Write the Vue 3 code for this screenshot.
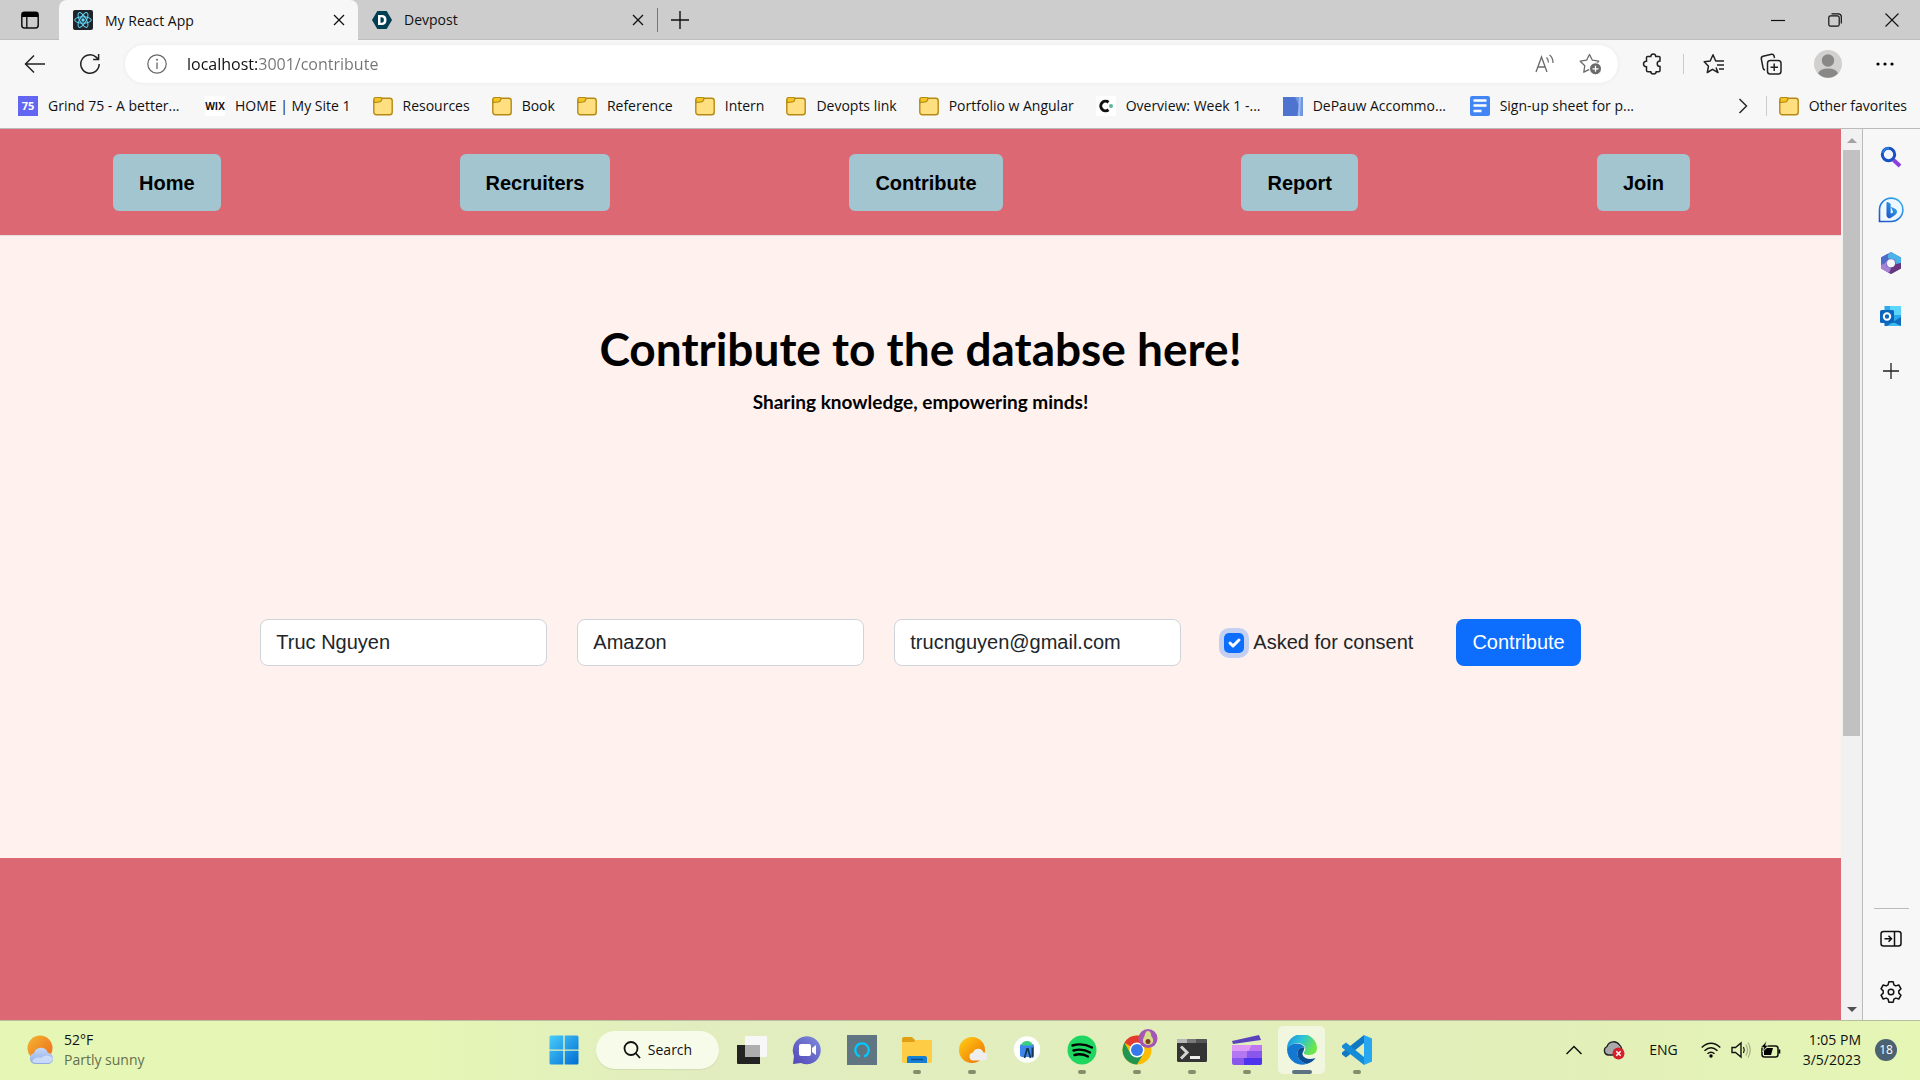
<script setup>
import { ref } from 'vue'

const bookmarks = [
  { icon: 'grind', label: 'Grind 75 - A better...', long: true },
  { icon: 'wix', label: 'HOME | My Site 1' },
  { icon: 'folder', label: 'Resources' },
  { icon: 'folder', label: 'Book' },
  { icon: 'folder', label: 'Reference' },
  { icon: 'folder', label: 'Intern' },
  { icon: 'folder', label: 'Devopts link' },
  { icon: 'folder', label: 'Portfolio w Angular' },
  { icon: 'course', label: 'Overview: Week 1 -...', long: true },
  { icon: 'depauw', label: 'DePauw Accommo...', long: true },
  { icon: 'doc', label: 'Sign-up sheet for p...', long: true }
]

const navLinks = ['Home', 'Recruiters', 'Contribute', 'Report', 'Join']

const apps = [
  { name: 'Task view', icon: 'taskview' },
  { name: 'Chat', icon: 'chat' },
  { name: 'Alexa', icon: 'alexa' },
  { name: 'File Explorer', icon: 'files', open: true },
  { name: 'Weather', icon: 'weather', open: true },
  { name: 'Android Studio', icon: 'android' },
  { name: 'Spotify', icon: 'spotify', open: true },
  { name: 'Chrome', icon: 'chrome', open: true },
  { name: 'Terminal', icon: 'terminal', open: true },
  { name: 'Clipchamp', icon: 'clipchamp', open: true },
  { name: 'Edge', icon: 'edge', open: true, active: true },
  { name: 'Visual Studio Code', icon: 'vscode', open: true }
]

const url = ref('localhost:3001/contribute')
const name = ref('Truc Nguyen')
const company = ref('Amazon')
const email = ref('trucnguyen@gmail.com')
const consent = ref(true)
</script>

<template>
  <div class="desktop">
    <header class="tabstrip">
      <button class="tab-actions" aria-label="Tab actions">
        <svg width="20" height="20" viewBox="0 0 20 20"><rect x="1.8" y="2.3" width="16.4" height="15.6" rx="2.6" fill="none" stroke="#111" stroke-width="1.5" /><path d="M2 7V4.5Q2 2 4.5 2h11Q18 2 18 4.500V7z" fill="#000" /><path d="M6.800 7v11" stroke="#111" stroke-width="1.400" /></svg>
      </button>
      <div class="tab tab-current">
        <svg width="20" height="20" viewBox="0 0 20 20"><rect width="20" height="20" rx="2" fill="#20232a" /><g fill="none" stroke="#61dafb" stroke-width="1"><ellipse cx="10" cy="10" rx="8.300" ry="3.200" /><ellipse cx="10" cy="10" rx="8.300" ry="3.200" transform="rotate(60 10 10)" /><ellipse cx="10" cy="10" rx="8.300" ry="3.200" transform="rotate(120 10 10)" /></g><circle cx="10" cy="10" r="1.700" fill="#61dafb" /></svg>
        <span class="tab-title">My React App</span>
        <button class="tab-close" aria-label="Close tab"><svg width="12" height="12" viewBox="0 0 12 12"><path d="M1 1l10 10M11 1L1 11" stroke="#111" stroke-width="1.300" /></svg></button>
      </div>
      <div class="tab">
        <svg width="20" height="20" viewBox="0 0 20 20"><path d="M5.300 1h9.400L20 10l-5.300 9H5.300L0 10z" fill="#003e54" /><path fill-rule="evenodd" d="M6 5h3.800q4.700 0 4.700 5t-4.700 5H6zM8.500 7.300v5.400h1.200q2.200 0 2.200-2.700t-2.200-2.700z" fill="#fff" /></svg>
        <span class="tab-title">Devpost</span>
        <button class="tab-close" aria-label="Close tab"><svg width="12" height="12" viewBox="0 0 12 12"><path d="M1 1l10 10M11 1L1 11" stroke="#111" stroke-width="1.300" /></svg></button>
      </div>
      <span class="tab-divider"></span>
      <button class="new-tab" aria-label="New tab"><svg width="18" height="18" viewBox="0 0 18 18"><path d="M9 0v18M0 9h18" stroke="#111" stroke-width="1.400" /></svg></button>
      <div class="window-buttons">
        <button aria-label="Minimize"><svg width="14" height="14" viewBox="0 0 14 14"><path d="M0 7.500h14" stroke="#111" stroke-width="1.200" /></svg></button>
        <button aria-label="Restore"><svg width="14" height="14" viewBox="0 0 14 14"><g fill="none" stroke="#111" stroke-width="1.200"><rect x=".8" y="2.800" width="10.400" height="10.400" rx="1.800" /><path d="M3.500.8h6.800q3 0 3 3v6.700" /></g></svg></button>
        <button aria-label="Close"><svg width="14" height="14" viewBox="0 0 14 14"><path d="M.5.5l13 13M13.500.5l-13 13" stroke="#111" stroke-width="1.100" /></svg></button>
      </div>
    </header>

    <div class="toolbar">
      <button class="tool" aria-label="Back"><svg width="22" height="20" viewBox="0 0 22 20"><path d="M21 10H2M10 1.500L1.500 10l8.500 8.500" fill="none" stroke="#222" stroke-width="1.500" /></svg></button>
      <button class="tool" aria-label="Refresh"><svg width="22" height="22" viewBox="0 0 22 22"><path d="M20.200 11a9.200 9.200 0 1 1-2.800-6.600l1.800 1.800M19.600 1v5.500h-5.500" fill="none" stroke="#222" stroke-width="1.500" /></svg></button>
      <div class="address">
        <svg width="20" height="20" viewBox="0 0 20 20"><circle cx="10" cy="10" r="9.200" fill="none" stroke="#666" stroke-width="1.200" /><path d="M10 8.500V15" stroke="#666" stroke-width="1.300" /><circle cx="10" cy="5.800" r="1" fill="#666" /></svg>
        <input v-model="url" class="url" type="text" aria-label="Address" />
        <button class="address-tool" aria-label="Read aloud"><svg width="22" height="22" viewBox="0 0 22 22"><g fill="none" stroke="#6a6a6a" stroke-width="1.300"><path d="M2 19L7.500 4 13 19M4 14h7.200M12.500 4.500q2 1.800 2 5M15.500 2q3.500 2.500 3.500 8" /></g></svg></button>
        <button class="address-tool" aria-label="Add to favorites"><svg width="22" height="22" viewBox="0 0 22 22"><path d="M10.500 1.500l2.900 5.700 6.300 1-4.500 4.500.9 6.500-5.600-2.900-5.700 2.900 1-6.500L1.200 8.200l6.400-1z" fill="none" stroke="#6a6a6a" stroke-width="1.300" stroke-linejoin="round" /><circle cx="16.500" cy="15.800" r="6" fill="#6a6a6a" stroke="#fff" /><path d="M16.500 12.800v6M13.500 15.800h6" stroke="#fff" stroke-width="1.300" /></svg></button>
      </div>
      <button class="tool" aria-label="Extensions"><svg width="22" height="22" viewBox="0 0 22 22"><path d="M5.500 3.500h3.300q.2-2.500 2.500-2.500t2.500 2.500H17q1 0 1 1V8q-2.800 0-2.800 2.800T18 13.600v4q0 1.200-1.200 1.200h-2.600q0 2.200-2.700 2.200t-2.700-2.200H6q-1.500 0-1.500-1.500v-3.600Q1.500 13.500 1.500 11t3-2.700V4.500q0-1 1-1z" fill="none" stroke="#222" stroke-width="1.500" /></svg></button>
      <span class="tool-divider"></span>
      <div class="tools">
        <button class="tool" aria-label="Favorites"><svg width="22" height="22" viewBox="0 0 22 22"><path d="M13 14.500l2 5-5.500-3.200-5.200 3.200 1.200-6.300L1.200 8.800l6-.8L10 1.800 12.700 8H21M14 12h7M16 16h5" fill="none" stroke="#222" stroke-width="1.500" stroke-linejoin="round" /></svg></button>
        <button class="tool" aria-label="Collections"><svg width="22" height="22" viewBox="0 0 22 22"><g fill="none" stroke="#222" stroke-width="1.500"><rect x="7.500" y="7.500" width="13.500" height="13.500" rx="2.800" /><path d="M5 17q-1.500-.3-1.900-2L1.300 6Q1 3.800 3 3.200l8.500-1.900q2-.3 2.500 1.500l.5 2.200M14.200 10.500v7.500M10.500 14.200h7.500" /></g></svg></button>
        <button class="tool" aria-label="Profile"><svg width="28" height="28" viewBox="0 0 28 28"><circle cx="14" cy="14" r="14" fill="#d2d0ce" /><circle cx="14" cy="10.500" r="6.200" fill="#8a8886" /><path d="M4 23.500Q6 18.500 14 18.500t10 5A14 14 0 0 1 4 23.500z" fill="#8a8886" /></svg></button>
        <button class="tool" aria-label="Settings and more"><svg width="18" height="6" viewBox="0 0 18 6"><circle cx="2" cy="3" r="1.600" /><circle cx="9" cy="3" r="1.600" /><circle cx="16" cy="3" r="1.600" /></svg></button>
      </div>
    </div>

    <nav class="bookmarks" aria-label="Favorites bar">
      <a v-for="b in bookmarks" :key="b.label" class="bookmark" href="#">
        <svg v-if="b.icon === 'folder'" width="20" height="20" viewBox="0 0 20 20"><rect x=".8" y="2.300" width="18.400" height="16.500" rx="2.500" fill="#ffdf80" stroke="#b58a12" stroke-width="1.400" /><path d="M1 6.500V3q0-1.500 1.500-1.500h5Q9 1.500 9 3l-1 2q-.5 1-2 1z" fill="#f3c526" stroke="#b58a12" stroke-width="1.200" /></svg>
        <span v-else-if="b.icon === 'grind'" class="favicon favicon-grind">75</span>
        <span v-else-if="b.icon === 'wix'" class="favicon favicon-wix">WIX</span>
        <svg v-else-if="b.icon === 'course'" width="20" height="20" viewBox="0 0 20 20"><rect width="20" height="20" fill="#fff" /><path d="M12.500 6.200a4.800 4.800 0 1 0 0 7.600" fill="none" stroke="#111" stroke-width="3" /><circle cx="15" cy="10" r="2" fill="#5db894" /></svg>
        <svg v-else-if="b.icon === 'depauw'" width="20" height="20" viewBox="0 0 20 20"><path d="M0 1h20v19H0z" fill="#4f74cf" /><path d="M12 1h8v19h-6l2-10z" fill="#7197df" /><path d="M16 1h2l-1 19h-2z" fill="#9dbcf0" /></svg>
        <svg v-else width="20" height="20" viewBox="0 0 20 20"><rect width="20" height="20" rx="2" fill="#4285f4" /><path d="M3.500 4.500h13M3.500 9.500h13M3.500 15h8" stroke="#fff" stroke-width="2.400" /></svg>
        <span class="bookmark-label" :class="{ long: b.long }">{{ b.label }}</span>
      </a>
      <button class="bookmark-more" aria-label="More favorites"><svg width="10" height="16" viewBox="0 0 10 16"><path d="M1.500 1L8.500 8l-7 7" fill="none" stroke="#222" stroke-width="1.400" /></svg></button>
      <span class="bookmark-divider"></span>
      <a class="bookmark" href="#">
        <svg width="20" height="20" viewBox="0 0 20 20"><rect x=".8" y="2.300" width="18.400" height="16.500" rx="2.500" fill="#ffdf80" stroke="#b58a12" stroke-width="1.400" /><path d="M1 6.500V3q0-1.500 1.500-1.500h5Q9 1.500 9 3l-1 2q-.5 1-2 1z" fill="#f3c526" stroke="#b58a12" stroke-width="1.200" /></svg>
        <span class="bookmark-label">Other favorites</span>
      </a>
    </nav>

    <div class="window-body">
      <main class="page">
        <nav class="site-nav">
          <a v-for="link in navLinks" :key="link" href="#" class="site-link">{{ link }}</a>
        </nav>
        <section class="contribute">
          <h1>Contribute to the databse here!</h1>
          <p class="tagline">Sharing knowledge, empowering minds!</p>
          <form class="form" @submit.prevent>
            <input v-model="name" class="field" type="text" aria-label="Name" />
            <input v-model="company" class="field" type="text" aria-label="Company" />
            <input v-model="email" class="field" type="email" aria-label="Email" />
            <div class="consent">
              <input id="consent" v-model="consent" type="checkbox" />
              <label for="consent">Asked for consent</label>
            </div>
            <button class="submit" type="submit">Contribute</button>
          </form>
        </section>
      </main>

      <div class="scrollbar" aria-hidden="true">
        <svg width="20" height="21" viewBox="0 0 20 21"><path d="M5 14l5-5 5 5z" fill="#a3a3a3" /></svg>
        <div class="scroll-track"><div class="scroll-thumb"></div></div>
        <svg width="20" height="21" viewBox="0 0 20 21"><path d="M5 8l5 5 5-5z" fill="#505050" /></svg>
      </div>

      <aside class="sidebar">
        <button aria-label="Search"><svg width="24" height="24" viewBox="0 0 24 24"><path d="M14.500 15l6.500 6" stroke="#8a3ee0" stroke-width="3.800" /><circle cx="9.500" cy="9.500" r="6.200" fill="#f2f7ff" stroke="#1850c4" stroke-width="3" /><path d="M4 8a6 6 0 0 1 6-5" fill="none" stroke="#2b80df" stroke-width="2" /></svg></button>
        <button aria-label="Bing"><svg width="26" height="26" viewBox="0 0 26 26"><defs><linearGradient id="bing" x1="1" y1="0" x2="0" y2="1"><stop stop-color="#35b6ee" /><stop offset="1" stop-color="#1b50c8" /></linearGradient></defs><path d="M1.500 24.500V13A11.700 11.700 0 1 1 13 24.500z" fill="#f0f8ff" stroke="url(#bing)" stroke-width="1.600" /><path d="M8.500 5.500Q9 4.800 10 5.300l2 1q.7.400.7 1.200v9.300l2.500-1.600-2.300-5.500 4.600 2.300q2 1.200 1.500 3.500-.4 1.700-2.500 3L12.500 21q-1.500.7-2.700-.3-1.300-1-1.300-2.700z" fill="url(#bing)" /></svg></button>
        <button aria-label="Microsoft 365"><svg width="22" height="24" viewBox="0 0 22 24"><path d="M11 1l10 5.500v11L11 23 1 17.500v-11z" fill="#6577d2" /><path d="M11 1l10 5.500V12l-4.500 1.500L15 8.500 8 7V4z" fill="#4cb2e8" /><path d="M21 12v5.500L11 23l-6-3.500 6.500-3L16 13z" fill="#69377f" /><path d="M1 6.500L8 2.700V10L6 15l5 2.500L9 22l-8-4.500z" fill="#a982d5" /><path d="M1 6.500L8 2.700V9l-4 4-3 1z" fill="#4f6dc8" /><circle cx="11" cy="12.200" r="4" fill="#f7f7f7" /></svg></button>
        <button aria-label="Outlook"><svg width="22" height="22" viewBox="0 0 22 22"><path d="M4.500 1h16.500v18H4.500z" fill="#2ba9ea" /><path d="M10 1h11v9H10z" fill="#5bd5fb" /><path d="M4.500 14L13 17l8-5v9H4.500z" fill="#126bbd" /><path d="M13 17l8 4H7z" fill="#38bdf1" /><rect y="5" width="14" height="13" rx="1.500" fill="#0a65bd" /><circle cx="7" cy="11.500" r="3.200" fill="none" stroke="#fff" stroke-width="2" /></svg></button>
        <button class="sidebar-add" aria-label="Add"><svg width="16" height="16" viewBox="0 0 16 16"><path d="M8 0v16M0 8h16" stroke="#222" stroke-width="1.300" /></svg></button>
        <span class="sidebar-space"></span>
        <span class="sidebar-divider"></span>
        <button aria-label="Hide sidebar"><svg width="22" height="18" viewBox="0 0 22 18"><g fill="none" stroke="#111" stroke-width="1.500"><rect x="1" y="1.500" width="20" height="14.500" rx="2.500" /><path d="M14.500 2v14M4.500 8.800h7M8.500 5.800l3 3-3 3" /></g></svg></button>
        <button aria-label="Settings"><svg width="24" height="24" viewBox="0 0 24 24"><path d="M9.800 1.800h4.400l.7 3 1.900 1.100 3-.9 2.200 3.800-2.200 2.100v2.200l2.200 2.100-2.200 3.800-3-.9-1.900 1.100-.7 3H9.800l-.7-3-1.900-1.100-3 .9L2 15.200l2.200-2.100v-2.200L2 8.800 4.200 5l3 .9 1.900-1.100z" fill="none" stroke="#111" stroke-width="1.500" stroke-linejoin="round" /><circle cx="12" cy="12" r="2.800" fill="none" stroke="#111" stroke-width="1.500" /></svg></button>
      </aside>
    </div>

    <footer class="taskbar">
      <div class="taskbar-side">
        <button class="weather">
          <svg width="28" height="30" viewBox="0 0 28 30"><defs><linearGradient id="sun" x1="0" y1="0" x2="1" y2="1"><stop stop-color="#f2b632" /><stop offset="1" stop-color="#f0681a" /></linearGradient><linearGradient id="cloud" x1="0" y1="0" x2="0" y2="1"><stop stop-color="#c5d9f7" /><stop offset="1" stop-color="#8fabe6" /></linearGradient></defs><circle cx="13" cy="13" r="12.500" fill="url(#sun)" /><path d="M8 29a5.500 5.500 0 0 1-1-10.800 7.200 7.200 0 0 1 13.800-.5A5.800 5.800 0 0 1 22 29z" fill="url(#cloud)" /><path d="M5 26q4-5 9-3 5-5 12 0-1 5-5 5H9q-3 0-4-2z" fill="#dce9fc" opacity=".7" /></svg>
          <span class="weather-text"><span>52°F</span><span class="muted">Partly sunny</span></span>
        </button>
      </div>

      <div class="dock">
        <button class="app" aria-label="Start"><svg width="30" height="30" viewBox="0 0 30 30"><defs><linearGradient id="win" x1="0" y1="0" x2="1" y2="1"><stop stop-color="#49cdfb" /><stop offset="1" stop-color="#006cd2" /></linearGradient></defs><path d="M2 .5h12.300v14H.5V2Q.5.500 2 .5zM15.700.5H28q1.500 0 1.500 1.500v12.500H15.700zM.5 15.800h13.800v13.700H2Q.5 29.500.5 28zM15.700 15.800h13.800V28q0 1.500-1.500 1.500H15.700z" fill="url(#win)" /></svg></button>
        <button class="search"><svg width="18" height="18" viewBox="0 0 18 18"><circle cx="8" cy="7.500" r="6.500" fill="none" stroke="#111" stroke-width="1.800" /><path d="M12.500 12l4.500 5" stroke="#111" stroke-width="1.800" /></svg>Search</button>
        <button v-for="app in apps" :key="app.name" class="app" :class="{ active: app.active, open: app.open }" :aria-label="app.name">
          <svg v-if="app.icon === 'taskview'" width="30" height="30" viewBox="0 0 30 30"><path d="M0 10h23v19H1q-1 0-1-1z" fill="#232323" /><rect x="8" y="1" width="22" height="21" rx="1" fill="#f7f7f7" /><path d="M8 10h15v12H8z" fill="#aeaeae" /></svg>
          <svg v-else-if="app.icon === 'chat'" width="30" height="30" viewBox="0 0 30 30"><defs><linearGradient id="chat" x1="1" y1="0" x2="0" y2="1"><stop stop-color="#7f8ddb" /><stop offset="1" stop-color="#5146b8" /></linearGradient></defs><path d="M1 29l1-8A14 14 0 1 1 9 28z" fill="url(#chat)" /><rect x="7" y="9" width="12" height="12" rx="2" fill="#fff" /><path d="M20 13l4-3v10l-4-3z" fill="#fff" /></svg>
          <svg v-else-if="app.icon === 'alexa'" width="30" height="30" viewBox="0 0 30 30"><path d="M0 0h30v30H0z" fill="#607582" /><path d="M13 21.500a6.700 6.700 0 1 1 4 0" fill="none" stroke="#00caff" stroke-width="2.200" /></svg>
          <svg v-else-if="app.icon === 'files'" width="30" height="30" viewBox="0 0 30 30"><path d="M0 8V4q0-2 2-2h8l3 3v6H0z" fill="#e0a016" /><path d="M0 7h12l2-2h16v21q0 2-2 2H2q-2 0-2-2z" fill="#ffcc45" /><path d="M5 28v-5q0-2 2-2h16q2 0 2 2v5z" fill="#1681d4" /><path d="M9 24.500h12" stroke="#0a4c91" stroke-width="1.500" /></svg>
          <svg v-else-if="app.icon === 'weather'" width="30" height="30" viewBox="0 0 30 30"><defs><linearGradient id="sunny" x1="0" y1="0" x2="1" y2="1"><stop stop-color="#ffd116" /><stop offset="1" stop-color="#ef6b00" /></linearGradient></defs><circle cx="15" cy="15" r="13" fill="url(#sunny)" /><path d="M17 25.500a4 4 0 0 1-1-8 5.500 5.500 0 0 1 10.500 0 4 4 0 0 1-.5 8z" fill="#eee" /></svg>
          <svg v-else-if="app.icon === 'android'" width="30" height="30" viewBox="0 0 30 30"><circle cx="15" cy="14.500" r="13.200" fill="#fff" /><rect x="8" y="9" width="14" height="13" rx="2" fill="#3e86ef" /><path d="M9.500 10.500a5.500 4.500 0 0 1 11 0z" fill="#3ccf80" /><path d="M12.500 23l2.500-9h1l2.500 9M20.500 12.500v10" fill="none" stroke="#153b55" stroke-width="1.800" /></svg>
          <svg v-else-if="app.icon === 'spotify'" width="30" height="30" viewBox="0 0 30 30"><circle cx="15" cy="15" r="14.500" fill="#1ed760" /><path d="M5.500 10.500q10-3 19.500 2M6.500 15.500q9-2.500 16.500 2M7.500 20q7-2 13.500 1.500" fill="none" stroke="#000" stroke-width="2.400" stroke-linecap="round" /></svg>
          <svg v-else-if="app.icon === 'chrome'" class="chrome" width="36" height="36" viewBox="0 0 36 36"><circle cx="15" cy="21" r="14.500" fill="#fbbc04" /><path d="M15 21L2.400 13.800A14.500 14.500 0 0 1 27.600 13.800z" fill="#e33b2e" /><path d="M2.400 13.800A14.500 14.500 0 0 0 15 35.500l6.500-11L15 21l-6.500 3.500z" fill="#219653" /><circle cx="15" cy="21" r="7.500" fill="#fff" /><circle cx="15" cy="21" r="6" fill="#3779e9" /><circle cx="26" cy="9.500" r="9.500" fill="#a456b5" /><path d="M26 2q3 0 3.200 5 3.300 4 1.300 7-4.500 4-9 0-1.500-3 1-7Q23.500 2 26 2z" fill="#d8dd8b" /><circle cx="26" cy="12.500" r="2.500" fill="#7b3c1c" /></svg>
          <svg v-else-if="app.icon === 'terminal'" width="30" height="30" viewBox="0 0 30 30"><rect y="4" width="30" height="23" rx="1.500" fill="#343434" /><path d="M0 8V5q0-1 1-1h9v4z" fill="#b7b7b7" /><path d="M10 4h9v4h-9z" fill="#7a7a7a" /><path d="M19 4h10q1 0 1 1v3H19z" fill="#555" /><path d="M4 11.500l6 6-6 6" fill="none" stroke="#d3d3d3" stroke-width="3" /><path d="M13 22.500h10" stroke="#eee" stroke-width="3" /></svg>
          <svg v-else-if="app.icon === 'clipchamp'" width="30" height="30" viewBox="0 0 30 30"><path d="M0 6L27 0l2 5L1 9z" fill="#5b42bd" /><path d="M0 10h30v18q0 2-2 2H2q-2 0-2-2z" fill="#8a57ec" /><path d="M0 10h20l-3 6H0z" fill="#dd9bf7" /><path d="M20 10h10v6H17z" fill="#bd76f2" /><path d="M0 16h15v7H0z" fill="#b377f2" /><path d="M12 23h18v5q0 2-2 2H12z" fill="#4e34ec" /></svg>
          <svg v-else-if="app.icon === 'edge'" width="30" height="30" viewBox="0 0 30 30"><defs><linearGradient id="edge1" x1="0" y1="0" x2="1" y2=".4"><stop stop-color="#1b8be0" /><stop offset=".5" stop-color="#2bc3d8" /><stop offset="1" stop-color="#6ce64a" /></linearGradient></defs><path d="M0 14A15 14.500 0 0 1 30 13q0 7-8 7-6 0-5-3 2-2 1-5-2-4-8-4-6 0-10 6z" fill="url(#edge1)" /><path d="M0 14Q3 8.500 9.500 8.500q6 0 8 4-7-1-7 6 0 8 9 10.500Q14 31 8 28 0 23 0 14z" fill="#1278d2" /><path d="M17.500 12.500q-7-1-7 6 0 8 9 10.500 6-1.500 9-6-6 2-10 0-5-3-2-7z" fill="#0c4f96" /></svg>
          <svg v-else width="30" height="30" viewBox="0 0 30 30"><path d="M22 0l8 3.500v23L22 30z" fill="#27a7f2" /><path d="M22 0v8L4 22.500 0 19.500v-2z" fill="#1079c2" /><path d="M22 30v-8L4 7.500 0 10.500v2z" fill="#168bd6" /></svg>
        </button>
      </div>

      <div class="taskbar-side tray">
        <button aria-label="Hidden icons"><svg width="16" height="10" viewBox="0 0 16 10"><path d="M.5 9L8 1.500 15.500 9" fill="none" stroke="#111" stroke-width="1.500" /></svg></button>
        <button class="onedrive" aria-label="OneDrive"><svg width="22" height="20" viewBox="0 0 22 20"><path d="M5 15a4.500 4.500 0 0 1-1-8.500 7 7 0 0 1 12.500-1.500Q19 7 19 12v3z" fill="#aaa" stroke="#222" stroke-width="1.300" /><circle cx="15.500" cy="13.500" r="6" fill="#d6202b" /><path d="M13.300 11.300l4.400 4.400M17.700 11.300l-4.400 4.400" stroke="#fff" stroke-width="1.500" /></svg></button>
        <button class="language">ENG</button>
        <button class="system" aria-label="Network, volume and battery">
          <svg width="20" height="16" viewBox="0 0 20 16"><g fill="none" stroke="#111" stroke-width="1.500"><path d="M.7 5.500q9.300-8.500 18.600 0M3.500 8.800q6.500-6 13 0M6.500 11.800q3.500-3.200 7 0" /></g><circle cx="10" cy="14" r="1.700" /></svg>
          <svg width="20" height="18" viewBox="0 0 20 18"><path d="M1 6.500h3.500L10 2v14l-5.500-4.500H1z" fill="none" stroke="#111" stroke-width="1.400" /><path d="M12.500 6q1.500 3 0 6" fill="none" stroke="#111" stroke-width="1.200" /><path d="M14.800 3.500q3.500 5.500 0 11M17 1.500q4.500 7.500 0 15" fill="none" stroke="#a4ad85" stroke-width="1.200" /></svg>
          <svg width="20" height="18" viewBox="0 0 20 18"><rect x="1" y="5" width="16" height="11" rx="2.500" fill="none" stroke="#111" stroke-width="1.500" /><path d="M3 14V9.500L6 7h6l-2 7zM17.500 8.500h1.800v4h-1.800z" /><path d="M5.500 0L0 6.500h3L1.500 11 7 4.500H4.500z" stroke="#e2f0b8" stroke-width=".6" /></svg>
        </button>
        <button class="clock"><span>1:05 PM</span><span>3/5/2023</span></button>
        <button class="badge" aria-label="18 notifications">18</button>
      </div>
    </footer>
  </div>
</template>

<style>
body {
  margin: 0;
}
</style>

<style scoped>
.desktop {
  display: flex;
  flex-direction: column;
  min-height: 100vh;
  background: #f7f7f7;
  color: #111;
  font-family: "Open Sans", "Noto Sans", sans-serif;
  font-size: 14px;
}
.desktop * {
  box-sizing: border-box;
}
svg {
  display: block;
  flex: none;
}
button {
  display: flex;
  align-items: center;
  justify-content: center;
  margin: 0;
  padding: 0;
  border: 0;
  background: none;
  color: inherit;
  font: inherit;
}
a {
  color: inherit;
  text-decoration: none;
}

/* Tab strip */
.tabstrip {
  display: flex;
  height: 40px;
  background: #cdcdcd;
  border-bottom: 1px solid #bdbdbd;
}
.tab-actions {
  width: 59px;
}
.tab {
  display: flex;
  align-items: center;
  gap: 12px;
  width: 299px;
  padding: 0 9px 0 14px;
}
.tab-current {
  height: 40px;
  background: #f7f7f7;
  border-radius: 8px 8px 0 0;
}
.tab-title {
  flex: 1;
}
.tab-close {
  width: 20px;
  height: 20px;
}
.tab-divider {
  width: 1px;
  margin: 8px 0 7px;
  background: #777;
}
.new-tab {
  width: 44px;
}
.window-buttons {
  display: flex;
  margin-left: auto;
}
.window-buttons button {
  width: 57px;
}

/* Toolbar */
.toolbar {
  display: flex;
  align-items: center;
  height: 48px;
  padding: 0 15px;
}
.tool {
  width: 40px;
  height: 40px;
}
.toolbar > .tool {
  margin-right: 15px;
}
.toolbar > .address + .tool {
  margin: 0 10px 0 15px;
}
.address {
  display: flex;
  flex: 1;
  align-items: center;
  height: 38px;
  padding: 0 17px 0 22px;
  border-radius: 19px;
  background: #fff;
  box-shadow: 0 0 4px #e8e8e8;
}
.url {
  flex: 1;
  min-width: 0;
  margin: 0 20px;
  padding: 0;
  border: 0;
  outline: 0;
  background: linear-gradient(90deg, #111 70px, #737373 70px) text;
  color: transparent;
  font: inherit;
  font-size: 16px;
  line-height: 24px;
}
.address-tool + .address-tool {
  margin-left: 23px;
}
.tool-divider {
  width: 1px;
  height: 20px;
  margin-right: 10px;
  background: #ccc;
}
.tools {
  display: flex;
  gap: 17px;
}

/* Favorites bar */
.bookmarks {
  display: flex;
  align-items: center;
  gap: 22px;
  height: 41px;
  padding: 0 13px 5px 18px;
  border-bottom: 1px solid #bbb;
  white-space: nowrap;
}
.bookmark {
  display: flex;
  align-items: center;
  gap: 10px;
}
.bookmark-label.long {
  width: 135px;
}
.favicon {
  width: 20px;
  height: 20px;
  line-height: 20px;
  text-align: center;
  font-weight: 700;
}
.favicon-grind {
  background: #6366f1;
  color: #fff;
  font-size: 11px;
}
.favicon-wix {
  background: #fff;
  font-size: 10px;
}
.bookmark-more {
  margin: 0 -4px 0 auto;
}
.bookmark-divider {
  width: 1px;
  height: 20px;
  margin-right: -10px;
  background: #ccc;
}

/* Page */
.window-body {
  display: flex;
  flex: 1;
}
.page {
  flex: 1;
  background: #dc6873;
  font-family: "Liberation Sans", Arial, sans-serif;
  font-size: 20px;
}
.site-nav {
  display: flex;
  align-items: center;
  justify-content: space-between;
  height: 106px;
  padding: 0 151px 0 113px;
}
.site-link {
  padding: 14px 26px 12px;
  border-radius: 6px;
  background: #a2c5d0;
  color: #000;
  font-weight: 700;
  line-height: 31px;
}
.contribute {
  padding: 85px 40px 192px;
  border-top: 1px solid #e8dfe0;
  background: #fff1ee;
  color: #000;
  text-align: center;
}
h1 {
  margin: 0;
  font-family: Lato, sans-serif;
  font-size: 46px;
  font-weight: 700;
  line-height: 56px;
}
.tagline {
  margin: 10px 0 202px;
  font-family: Lato, sans-serif;
  font-size: 19px;
  font-weight: 700;
  line-height: 30px;
}
.form {
  display: flex;
  align-items: center;
  justify-content: center;
  gap: 30px;
  color: #212529;
}
.field {
  width: 287px;
  height: 47px;
  padding: 0 15px;
  border: 1px solid #ced4da;
  border-radius: 8px;
  background: #fff;
  color: inherit;
  font: inherit;
}
.consent {
  display: flex;
  align-items: center;
  gap: 9px;
  margin: 0 13px;
}
.consent input {
  appearance: none;
  width: 20px;
  height: 20px;
  margin: 0;
  border-radius: 5px;
  background: #0d6efd url("data:image/svg+xml,%3Csvg xmlns='http://www.w3.org/2000/svg' viewBox='0 0 20 20'%3E%3Cpath fill='none' stroke='%23fff' stroke-width='3' stroke-linecap='round' stroke-linejoin='round' d='m6 10 3 3 6-6'/%3E%3C/svg%3E");
  box-shadow: 0 0 0 5px #c3d0f2;
}
.submit {
  height: 47px;
  padding: 0 16px;
  border-radius: 8px;
  background: #0d6efd;
  color: #fff;
}

/* Scrollbar and sidebar */
.scrollbar {
  display: flex;
  flex-direction: column;
  align-items: center;
  width: 21px;
  background: #f1f1f1;
}
.scroll-track {
  flex: 1;
  width: 17px;
}
.scroll-thumb {
  height: 69%;
  background: #c1c1c1;
}
.sidebar {
  display: flex;
  flex-direction: column;
  align-items: center;
  width: 58px;
  padding: 1px 1px 2px 0;
  border-left: 1px solid #bbb;
}
.sidebar button {
  width: 40px;
  height: 53px;
}
.sidebar .sidebar-add {
  margin-top: 2px;
}
.sidebar-space {
  flex: 1;
}
.sidebar-divider {
  width: 35px;
  height: 1px;
  margin-bottom: 3px;
  background: #bbb;
}

/* Taskbar */
.taskbar {
  display: flex;
  align-items: center;
  height: 60px;
  padding-bottom: 2px;
  border-top: 1px solid #b9bf9e;
  background: linear-gradient(90deg, #e5f6b5 0%, #e5f6b5 22%, #e1edbf 36%, #e2efb9 80%, #e5f6b5 100%);
}
.taskbar-side {
  display: flex;
  flex: 1;
  align-items: center;
}
.weather {
  gap: 9px;
  margin-left: 27px;
}
.weather-text {
  display: flex;
  flex-direction: column;
  line-height: 20px;
  text-align: left;
}
.muted {
  color: #66704e;
}
.dock {
  display: flex;
  align-items: center;
}
.app {
  position: relative;
  width: 47px;
  height: 48px;
  margin: 0 4px;
  border-radius: 5px;
}
.app.active {
  background: #f1f6df;
}
.app.open::after {
  content: "";
  position: absolute;
  bottom: 0;
  width: 8px;
  height: 4px;
  border-radius: 2px;
  background: #858d6b;
}
.app.active::after {
  width: 20px;
  background: #5d7381;
}
.app .chrome {
  margin: -6px -6px 0 0;
}
.search {
  gap: 7px;
  width: 123px;
  height: 38px;
  margin: 0 5px;
  border-radius: 19px;
  background: #f7fbea;
  box-shadow: 0 1px 1px #d2dcae;
}
.tray {
  justify-content: flex-end;
}
.onedrive {
  margin: 0 24px 0 21px;
}
.language {
  margin-right: 23px;
}
.system {
  gap: 10px;
  margin-right: 22px;
}
.clock {
  flex-direction: column;
  align-items: flex-end;
  line-height: 20px;
}
.badge {
  width: 22px;
  height: 22px;
  margin: 0 23px 0 14px;
  border-radius: 50%;
  background: #4b6273;
  color: #fff;
  font-size: 12px;
}
</style>
